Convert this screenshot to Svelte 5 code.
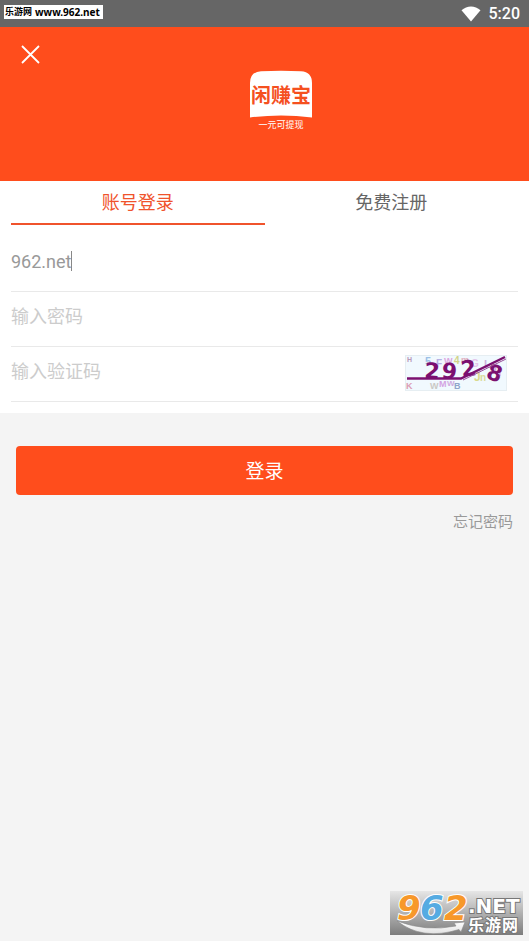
<script>
  let account = $state('962.net');
  let password = $state('');
  let code = $state('');
  let tab = $state('login');

  // Faint background characters of the captcha: [char, x, y, size, colour]
  const noise = [
    ['H', 2, 7, 7, '#b99ab8'], ['5', 20, 10, 11, '#9cc0e6'], ['F', 31, 12, 10, '#b5b0e4'],
    ['W', 39, 9, 9, '#dca6de'], ['4', 49, 9, 10, '#d2d489'], ['m', 56, 8, 9, '#e0b0c0'],
    ['G', 66, 12, 10, '#e3c5ea'], ['L', 79, 13, 11, '#cdb2dd'],
    ['q', 89, 18, 12, '#dba4da'], ['J', 69, 26, 12, '#d9d98c'], ['n', 75, 26, 10, '#dadb9c'],
    ['K', 1, 34, 9, '#dc9db4'], ['W', 25, 34, 9, '#c9c8c4'], ['M', 34, 32, 9, '#d4a3e2'],
    ['W', 42, 31, 8, '#cfaae0'], ['B', 49, 34, 9, '#8fa4ca'],
  ];
</script>

<div class="page">
  <header class="status">
    <span class="source">乐游网 <span>www.962.net</span></span>
    <span class="tray">
      <svg width="20" height="16" viewBox="0 0 20 16" aria-hidden="true">
        <path d="M0.5 4.2C6 -0.9 14 -0.9 19.5 4.2L10 15.6Z" fill="#fff" />
      </svg>
      <time>5:20</time>
    </span>
  </header>

  <section class="hero">
    <button class="close" type="button" aria-label="关闭">
      <svg width="19" height="19" viewBox="0 0 19 19" aria-hidden="true">
        <path d="M1 1L18 18M18 1L1 18" stroke="#fff" stroke-width="1.8" fill="none" />
      </svg>
    </button>
    <svg class="logo" width="64" height="62" viewBox="0 0 64 62" role="img" aria-label="闲赚宝 一元可提现">
      <path d="M1 13Q1 2 12 1.3Q32 0 52 1.3Q63 2 63 13V47.5Q32 43.5 1 47.5Z" fill="#fff" />
      <text x="32" y="33" text-anchor="middle" class="brand">闲赚宝</text>
      <text x="32" y="58" text-anchor="middle" class="slogan">一元可提现</text>
    </svg>
  </section>

  <form class="card" onsubmit={(e) => e.preventDefault()}>
    <div class="tabs">
      <button type="button" class:active={tab === 'login'} onclick={() => (tab = 'login')}>账号登录</button>
      <button type="button" class:active={tab === 'register'} onclick={() => (tab = 'register')}>免费注册</button>
    </div>

    <label class="row">
      <input class="account" type="text" aria-label="账号" bind:value={account} />
      <span class="caret"></span>
    </label>
    <label class="row">
      <input type="password" aria-label="密码" placeholder="输入密码" bind:value={password} />
    </label>
    <div class="row">
      <input type="text" aria-label="验证码" placeholder="输入验证码" bind:value={code} />
      <button class="captcha" type="button" aria-label="刷新验证码">
        <svg width="102" height="36" viewBox="0 0 102 36" aria-hidden="true">
          <rect x="0.5" y="0.5" width="101" height="35" fill="#f1f9fe" stroke="#e6eef2" />
          {#each noise as [char, x, y, size, colour]}
            <text {x} {y} font-size={size} fill={colour} class="noise">{char}</text>
          {/each}
          <g class="digits">
            <text x="19" y="23" transform="rotate(4 19 23)">2</text>
            <text x="36" y="23" transform="rotate(6 36 23)">9</text>
            <text x="57" y="22" transform="rotate(-8 57 22)">2</text>
            <text x="80" y="23" transform="rotate(18 80 23)">8</text>
          </g>
          <path d="M2 23.5H56L100 2" fill="none" stroke="#7b1070" stroke-width="2.4" />
          <path d="M58 25L101 4" fill="none" stroke="#9a4f9a" stroke-width="1" />
        </svg>
      </button>
    </div>
  </form>

  <div class="actions">
    <button class="submit" type="button">登录</button>
    <a href="#forgot">忘记密码</a>
  </div>

  <svg class="stamp" width="133" height="44" viewBox="0 0 133 44" role="img" aria-label="962.NET 乐游网">
    <defs>
      <linearGradient id="plate" x1="0" y1="0" x2="0" y2="1">
        <stop offset="0" stop-color="#e6e6e6" />
        <stop offset="1" stop-color="#7d7d7d" />
      </linearGradient>
      <linearGradient id="swoosh" x1="0" y1="0" x2="0" y2="1">
        <stop offset="0" stop-color="#fff" />
        <stop offset="1" stop-color="#e2e2e2" />
      </linearGradient>
    </defs>
    <rect width="133" height="44" fill="url(#plate)" />
    <path d="M7 30Q36 41 66 35L64 32L75 31L71 41L69 38.5Q32 50 7 30Z" fill="url(#swoosh)" stroke="#888" stroke-width="0.6" />
    <g class="number">
      <text x="7" y="29" fill="#f7982a">9</text>
      <text x="30" y="29" fill="#55abe2">6</text>
      <text x="54" y="29" fill="#f7982a">2</text>
    </g>
    <text x="78" y="22" class="domain">.NET</text>
    <g class="site">
      <text x="78" y="40">乐</text>
      <text x="95" y="40">游</text>
      <text x="112" y="40">网</text>
    </g>
  </svg>
</div>

<style>
  :global(body) {
    margin: 0;
    background: #f4f4f4;
  }
  .page {
    position: relative;
    min-height: 100vh;
    background: #f4f4f4;
    font-family: Roboto, 'Noto Sans CJK SC', sans-serif;
    font-size: 18px;
    color: #666;
  }
  button,
  input {
    margin: 0;
    padding: 0;
    border: 0;
    background: none;
    font: inherit;
    color: inherit;
  }
  button {
    cursor: pointer;
  }
  svg {
    display: block;
  }
  .status {
    display: flex;
    align-items: center;
    justify-content: space-between;
    box-sizing: border-box;
    height: 27px;
    padding: 0 9px 0 4px;
    background: #666;
  }
  .source {
    display: flex;
    gap: 3px;
    margin-bottom: 3px;
    padding: 0 3px 0 1px;
    background: #fff;
    color: #000;
    font: bold 9px/14px 'Noto Sans', 'Noto Sans CJK SC', sans-serif;
  }
  .source span {
    font-size: 10px;
  }
  .tray {
    display: flex;
    align-items: center;
    gap: 8px;
    color: #fff;
    font-size: 16px;
    font-weight: 500;
  }
  .hero {
    display: grid;
    grid-template-columns: 1fr auto 1fr;
    box-sizing: border-box;
    height: 154px;
    padding: 18px 0 0 21px;
    background: #ff4d1c;
  }
  .close {
    width: 19px;
    height: 19px;
  }
  .logo {
    margin: 25px 0 0 12px;
  }
  .brand {
    fill: #f5501f;
    font: bold 20px 'Noto Sans CJK SC', sans-serif;
  }
  .slogan {
    fill: #fff;
    font: 9px 'Noto Sans CJK SC', sans-serif;
  }
  .card {
    padding: 0 11px 11px;
    background: #fff;
  }
  .tabs {
    display: flex;
    margin-bottom: 12px;
  }
  .tabs button {
    flex: 1;
    height: 44px;
    padding-bottom: 2px;
    border-bottom: 2px solid transparent;
  }
  .tabs .active {
    border-color: #f0532c;
    color: #f0532c;
  }
  .row {
    display: flex;
    align-items: center;
    box-sizing: border-box;
    height: 55px;
    padding-bottom: 6px;
    border-bottom: 1px solid #e9e9e9;
  }
  .row input {
    flex: 1;
    min-width: 0;
    height: 32px;
    outline: none;
    color: #999;
  }
  .row .account {
    flex: none;
    field-sizing: content;
  }
  .row input::placeholder {
    color: #ccc;
    opacity: 1;
  }
  .caret {
    width: 1px;
    height: 20px;
    background: #888;
  }
  .captcha {
    margin: 3px 11px 0 0;
  }
  .noise {
    font-family: 'Liberation Sans', sans-serif;
    font-weight: bold;
  }
  .digits {
    fill: #7b1070;
    font: bold 22px 'DejaVu Sans', sans-serif;
  }
  .actions {
    display: flex;
    flex-direction: column;
    align-items: flex-end;
    gap: 15px;
    padding: 33px 16px 0;
  }
  .submit {
    width: 100%;
    height: 49px;
    padding-bottom: 2px;
    border-radius: 4px;
    background: #ff4d1c;
    color: #fff;
    font-size: 19px;
  }
  .actions a {
    color: #999;
    font-size: 15px;
    line-height: 24px;
    text-decoration: none;
  }
  .stamp {
    position: absolute;
    right: 6px;
    bottom: 6px;
  }
  .number {
    stroke: #fff;
    stroke-width: 2px;
    paint-order: stroke;
    font: italic bold 34px 'DejaVu Sans', sans-serif;
  }
  .domain,
  .site {
    fill: #fff;
    stroke: #777;
    stroke-width: 2px;
    paint-order: stroke;
  }
  .domain {
    font: bold 20px 'DejaVu Sans', sans-serif;
  }
  .site {
    font: bold 16px 'Noto Sans CJK SC', sans-serif;
  }
</style>
